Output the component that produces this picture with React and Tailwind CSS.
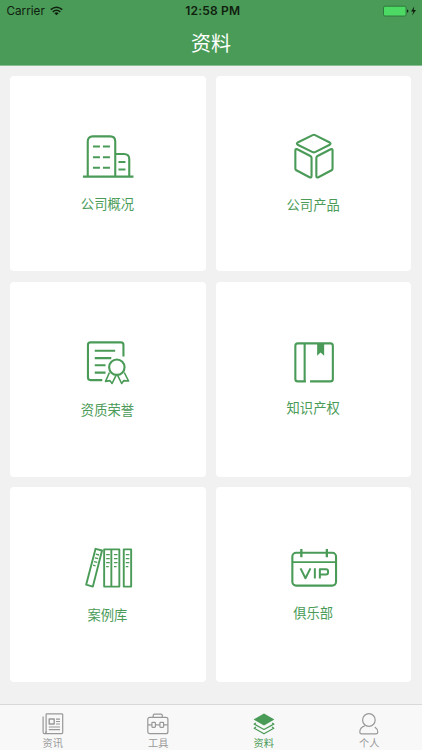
import React from "react";

const GREEN = "#4a9b57";

function CardIcon({ box, children }) {
  return (
    <svg
      viewBox={box}
      className="block h-[52px] w-[60px] shrink-0"
      fill="none"
      stroke={GREEN}
      strokeWidth="2.1"
      strokeLinejoin="round"
    >
      {children}
    </svg>
  );
}

const Buildings = () => (
  <CardIcon box="8.05 5 60 52">
    <path d="M13 51.6H63.5" />
    <path d="M17.8 51V16.4Q17.8 11.4 22.8 11.4H40.3Q45.3 11.4 45.3 16.4V51" />
    <path d="M45.3 29H54Q59.3 29 59.3 34V51" />
    <path d="M23 21.5h7M33 21.5h7M23 32.3h7M33 32.3h7M23 42.7h7M33 42.7h7M48.5 37h7M48.5 44.5h7" />
  </CardIcon>
);

const Cube = () => (
  <CardIcon box="8.65 5 60 52">
    <path d="M37.3 10.1Q38.5 9.5 39.7 10.1L54.4 17.5Q56 18.6 54.4 19.7L39.7 27.1Q38.5 27.7 37.3 27.1L22.3 19.7Q20.7 18.6 22.3 17.5Z" />
    <path d="M21.9 24.3L35 31Q36.2 31.7 36.2 33V51Q36.2 53.2 34.2 52.2L21 45.3Q20 44.7 20 43.4V25.5Q20 23.4 21.9 24.3Z" />
    <path d="M55.3 24.3L42.2 31Q41 31.7 41 33V51Q41 53.2 43 52.2L56.2 45.3Q57.2 44.7 57.2 43.4V25.5Q57.2 23.4 55.3 24.3Z" />
  </CardIcon>
);

const Certificate = () => (
  <CardIcon box="8.05 5.6 60 52">
    <path d="M32.3 49.7H20.5Q18 49.7 18 47.2V14.5Q18 12 20.5 12H51Q53.5 12 53.5 14.5V26.2" />
    <path d="M24.8 20.3h20.4M24.8 27.7h16.5M24.8 34.8h10.8M24.8 42.2h10.8" />
    <circle cx="46.9" cy="36.8" r="7.7" />
    <path
      strokeWidth="1.6"
      d="M39.5 42.1L35.6 51l4.4-.8 2.1 2.9 4-8.2M54.3 42.1l4.3 8.5-4.7-.4-2.2 2.9-4-8.2"
    />
  </CardIcon>
);

const Book = () => (
  <CardIcon box="8.65 5.6 60 52">
    <path d="M30.5 51H22.5Q20 51 20 48.5V15.5Q20 13 22.5 13H55Q57.5 13 57.5 15.5V48.5Q57.5 51 55 51H34.7" />
    <path d="M29.3 13V51" />
    <path d="M41.8 13.5H48.8V25.3L45.2 22.2 41.8 25.3Z" fill={GREEN} stroke="none" />
  </CardIcon>
);

const Binders = () => (
  <CardIcon box="8.05 6.2 60 52">
    <path strokeWidth="1.9" d="M25.6 14l6.5 1.7-9.2 36.1-6.7-1.9Z" />
    <path strokeWidth="1.9" d="M34.2 14.6h7.2v37.2h-7.2ZM41.4 14.6h8v37.2h-8ZM53.8 14.6h7.4v37.2h-7.4Z" />
    <path
      strokeWidth="1.3"
      d="M25.8 19.4l3.3.8M24.9 23l3.3.8M24 26.8l3.3.8M23.1 30.4l2.5.6M36.2 19.8h3.6M36.2 23.8h3.6M36.2 27.8h3.6M36.2 31.8h2.6M44 19.8h3.6M44 23.8h3.6M44 27.8h3.6M44 31.8h2.6M55.8 19.8h3.6M55.8 23.8h3.6M55.8 27.8h3.6M55.8 31.8h2.6"
    />
  </CardIcon>
);

const VipCalendar = () => (
  <CardIcon box="8.65 6.2 60 52">
    <rect x="17" y="18" width="43.7" height="32.8" rx="3.8" />
    <path d="M17 27.4H60.7" strokeWidth="1.8" />
    <path d="M26 14.3v8.2M51.5 14.3v8.2" strokeWidth="2.3" />
    <path
      strokeWidth="2"
      d="M25.2 33.6l4.9 9.8 5-9.8M39.5 33.4v10.4M44.5 43.8V34.4h6.2q2 0 2 2v1.4q0 2-2 2h-6.2"
    />
  </CardIcon>
);

const CARDS = [
  { label: "公司概况", Icon: Buildings, gap: "mt-[12px]" },
  { label: "公司产品", Icon: Cube, gap: "mt-[13px]" },
  { label: "资质荣誉", Icon: Certificate, gap: "mt-[12.4px]" },
  { label: "知识产权", Icon: Book, gap: "mt-[10.9px]" },
  { label: "案例库", Icon: Binders, gap: "mt-[11.8px]" },
  { label: "俱乐部", Icon: VipCalendar, gap: "mt-[10.3px]" },
];

function TabIcon({ children }) {
  return (
    <svg
      viewBox="0 0 22 22"
      className="block size-[22px]"
      fill="none"
      stroke="currentColor"
      strokeWidth="1.2"
      strokeLinejoin="round"
    >
      {children}
    </svg>
  );
}

const NewsIcon = () => (
  <TabIcon>
    <path d="M4.1 20.7V1.6Q4.1.8 4.9.8H19.8Q20.7.8 20.7 1.6V19.6Q20.7 20.7 19.6 20.7H2.6Q1.1 20.7 1.1 19.2V3.4" />
    <path d="M4.1 18.5Q4.1 20.7 2.6 20.7" />
    <rect x="7.2" y="6" width="5" height="5" strokeWidth="1.4" />
    <path d="M14 6.1h4M14 8.5h4M14 11h4M6.8 14h11.2M6.8 16.7h11.2" />
  </TabIcon>
);

const ToolIcon = () => (
  <TabIcon>
    <path d="M6.2 4.3V2.5Q6.2 1.2 7.5 1.2H14Q15.3 1.2 15.3 2.5V4.3" />
    <rect x=".8" y="4.4" width="20.1" height="16.3" rx="2" />
    <path d="M1 11.8H4.8M8.5 11.8h4.3M16.7 11.8h4.1" />
    <rect x="4.9" y="9.3" width="3.5" height="5" rx=".7" />
    <rect x="12.9" y="9.3" width="3.7" height="5" rx=".7" />
  </TabIcon>
);

const LayersIcon = () => (
  <TabIcon>
    <path d="M11 .5L21.4 6.5 11 12.6.6 6.5Z" fill="currentColor" stroke="none" />
    <path
      d="M3 10L1.2 11.1 11 16.5 20.8 11.1 19 10M3 14L1.2 15.2 11 20.8 20.8 15.2 19 14"
      strokeWidth="1.2"
    />
  </TabIcon>
);

const PersonIcon = () => (
  <TabIcon>
    <circle cx="10.9" cy="7" r="6.3" />
    <path d="M7.1 12.8Q1.8 14.4 1.8 19Q1.8 20.9 3.5 20.9H18Q19.8 20.9 19.8 19Q19.8 16.2 16.8 14.1" />
  </TabIcon>
);

const TABS = [
  { label: "资讯", Icon: NewsIcon },
  { label: "工具", Icon: ToolIcon },
  { label: "资料", Icon: LayersIcon, active: true },
  { label: "个人", Icon: PersonIcon },
];

function StatusBar() {
  return (
    <div className="grid h-[22px] grid-cols-[1fr_auto_1fr] items-center pr-[4px] pl-[6.5px] font-['Inter',sans-serif] text-[12px] leading-[22px] text-[#10200f]">
      <div className="flex items-center gap-[5px]">
        <span className="text-[11.7px]">Carrier</span>
        <svg viewBox="0 0 14 10" className="h-[10px] w-[13px]" fill="none" stroke="currentColor" strokeWidth="1.6">
          <path d="M.8 3.5Q7-1.7 13.2 3.5M3 5.9Q7 2.5 11 5.9" />
          <path d="M4.7 7.4Q7 5.5 9.3 7.4L7 9.7Z" fill="currentColor" stroke="none" />
        </svg>
      </div>
      <span className="pl-[1px] font-semibold tracking-[0.2px]">12:58 PM</span>
      <svg viewBox="0 0 36 12" className="h-[12px] w-[36px] justify-self-end">
        <rect x="1.5" y="1.2" width="22.5" height="9.8" rx="1.5" fill="#4cd964" stroke="#286a36" strokeWidth=".8" />
        <path d="M25 4.4Q26.4 4.8 26.4 6.1T25 7.8Z" fill="#10200f" />
        <path d="M32.2 1.6L29.1 6.6H31.3L30.1 10.6 34 5.1H31.7Z" fill="#10200f" />
      </svg>
    </div>
  );
}

export default function App() {
  return (
    <div className="flex h-[750px] w-[422px] flex-col overflow-hidden bg-[#f1f1f1] font-['Noto_Sans_CJK_SC',sans-serif]">
      <header className="h-[66px] shrink-0 border-b border-[#8abf92] bg-[#4a9b57]">
        <StatusBar />
        <h1 className="text-center text-[20px] leading-[42px] font-normal text-white">资料</h1>
      </header>

      <main className="grid flex-1 auto-rows-[195.2px] grid-cols-2 content-start gap-[10.4px] pt-[10px] pr-[10.7px] pl-[10.3px]">
        {CARDS.map(({ label, Icon, gap }) => (
          <section key={label} className="flex flex-col items-center rounded-[4px] bg-white pt-[54px]">
            <Icon />
            <span className={`${gap} pr-[1px] text-[13.3px] leading-[20px] font-normal text-[#4a9b57]`}>{label}</span>
          </section>
        ))}
      </main>

      <nav className="grid h-[46px] shrink-0 grid-cols-4 border-t border-[#d9d9d9] bg-[#f8f8f8]">
        {TABS.map(({ label, Icon, active }) => (
          <div
            key={label}
            className={`flex flex-col items-center pt-[8px] ${active ? "text-[#4a9b57]" : "text-[#989898]"}`}
          >
            <Icon />
            <span className="text-[10.2px] leading-[15px] font-normal">{label}</span>
          </div>
        ))}
      </nav>
    </div>
  );
}
